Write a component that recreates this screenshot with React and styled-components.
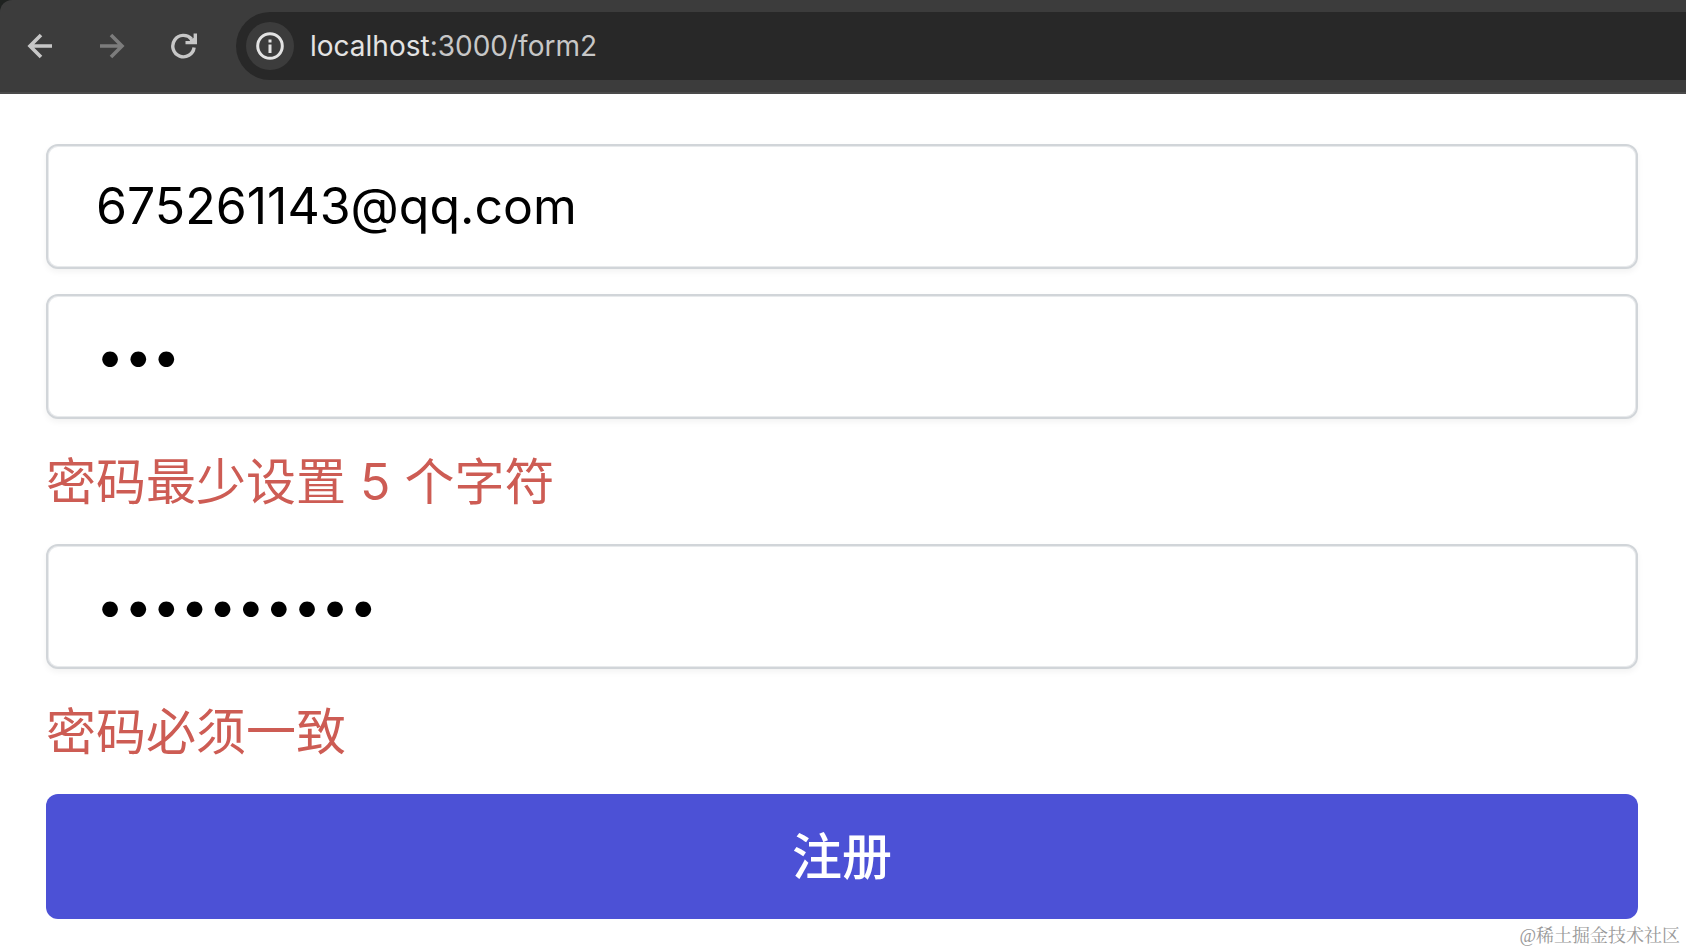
import React from 'react';
import styled, { createGlobalStyle } from 'styled-components';

const GlobalStyle = createGlobalStyle`
  *, *::before, *::after { box-sizing: border-box; }
  body { margin: 0; background: #fff; color: #000; font-family: Inter, "Noto Sans CJK SC", sans-serif; }
  button, input { font: inherit; }
`;

const Backdrop = styled.div`
  background: #1f2220;
`;

const Toolbar = styled.header`
  display: flex;
  align-items: center;
  gap: 24px;
  padding: 12px 0 12px 16px;
  background: #3c3c3c;
  border-bottom: 2px solid #4a4a4a;
  border-top-left-radius: 12px;
`;

const NavButton = styled.button`
  display: flex;
  align-items: center;
  justify-content: center;
  width: 48px;
  height: 48px;
  padding: 0;
  border: 0;
  background: none;
  color: ${(p) => (p.$dim ? '#7c7c7c' : '#c7c7c7')};
`;

const AddressBar = styled.div`
  flex: 1;
  display: flex;
  align-items: center;
  gap: 16px;
  min-height: 68px;
  margin-left: 4px;
  padding: 10px;
  border-radius: 34px 0 0 34px;
  background: #282828;
`;

const InfoButton = styled(NavButton)`
  border-radius: 50%;
  background: #3c3c3c;
  color: #e3e3e3;
`;

const Url = styled.span`
  font-size: 28px;
  line-height: 36px;
  color: #c7c7c7;
`;

const Host = styled.span`
  color: #e3e3e3;
`;

const Form = styled.form`
  display: flex;
  flex-direction: column;
  gap: 25px;
  padding: 50px 48px 0 46px;
`;

const Field = styled.div`
  display: flex;
  flex-direction: column;
  gap: 25px;
`;

const Input = styled.input`
  width: 100%;
  height: 125px;
  padding: 0 48px 2px;
  border: 2px solid #d1d5d9;
  border-radius: 12px;
  outline: none;
  background: #fff;
  color: #000;
  font-size: 50px;
  box-shadow: inset 0 0 0 1px #e8eaec, 0 3px 6px rgba(0, 0, 0, 0.05);
`;

const ErrorText = styled.p`
  margin: 0;
  padding-top: 2px;
  font-size: 50px;
  line-height: 73px;
  color: #cd5c54;
`;

const SubmitButton = styled.button`
  height: 125px;
  padding: 0 0 8px;
  border: 0;
  border-radius: 12px;
  background: #4c51d6;
  color: #fff;
  font-size: 50px;
  font-weight: 500;
`;

const Credit = styled.footer`
  padding: 1px 6px 0 0;
  text-align: right;
  font-family: "Liberation Serif", "Noto Serif CJK SC", "Noto Sans CJK SC", serif;
  font-size: 18px;
  line-height: 32px;
  color: #999;
`;

const ArrowIcon = ({ forward }) => (
  <svg width="26" height="26" viewBox="0 0 26 26" fill="none" stroke="currentColor" strokeWidth="3.6" aria-hidden="true">
    <path d={forward ? 'M1 13H23M12 2L23 13L12 24' : 'M25 13H3M14 2L3 13L14 24'} />
  </svg>
);

const ReloadIcon = () => (
  <svg width="28" height="28" viewBox="0 0 28 28" aria-hidden="true">
    <path
      d="M24.100 15.500A10.700 10.700 0 1 1 21.500 7"
      fill="none"
      stroke="currentColor"
      strokeWidth="3.4"
    />
    <path d="M27 1.500V12.300H15.500V9H20L19.500 7L23.600 6V1.500Z" fill="currentColor" />
  </svg>
);

const InfoIcon = () => (
  <svg width="28" height="28" viewBox="0 0 28 28" fill="none" stroke="currentColor" strokeWidth="3" aria-hidden="true">
    <circle cx="14" cy="14" r="12.3" />
    <path d="M14 12.500V21M14 7.500V10.500" />
  </svg>
);

export default function App() {
  return (
    <>
      <GlobalStyle />
      <Backdrop>
        <Toolbar>
          <NavButton type="button" aria-label="Back"><ArrowIcon /></NavButton>
          <NavButton type="button" aria-label="Forward" $dim><ArrowIcon forward /></NavButton>
          <NavButton type="button" aria-label="Reload"><ReloadIcon /></NavButton>
          <AddressBar>
            <InfoButton type="button" aria-label="Site information"><InfoIcon /></InfoButton>
            <Url><Host>localhost</Host>:3000/form2</Url>
          </AddressBar>
        </Toolbar>
      </Backdrop>
      <main>
        <Form onSubmit={(e) => e.preventDefault()}>
          <Input type="email" aria-label="邮箱" defaultValue="675261143@qq.com" />
          <Field>
            <Input type="password" aria-label="密码" aria-describedby="password-error" defaultValue="abc" />
            <ErrorText id="password-error">密码最少设置 5 个字符</ErrorText>
          </Field>
          <Field>
            <Input type="password" aria-label="确认密码" aria-describedby="confirm-error" defaultValue="abcdefghij" />
            <ErrorText id="confirm-error">密码必须一致</ErrorText>
          </Field>
          <SubmitButton type="submit">注册</SubmitButton>
        </Form>
      </main>
      <Credit>@稀土掘金技术社区</Credit>
    </>
  );
}
